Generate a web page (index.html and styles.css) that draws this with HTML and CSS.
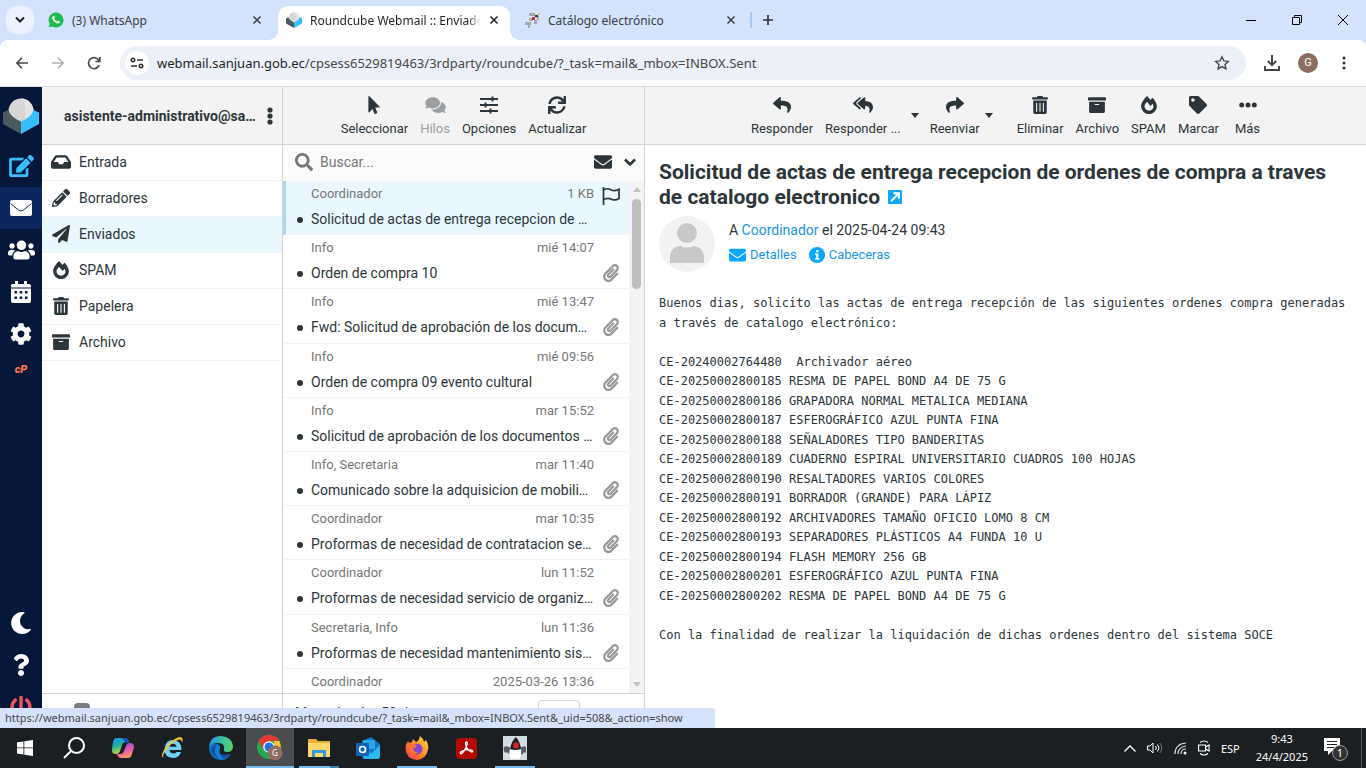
FILE: index.html
```html
<!DOCTYPE html>
<html lang="es">
<head>
<meta charset="utf-8">
<title>Roundcube Webmail :: Enviados</title>
<link rel="stylesheet" href="styles.css">
</head>
<body>
<svg class="sprite" aria-hidden="true">
  <symbol id="i-close" viewBox="0 0 10 10"><path d="M1.500 1.500l7 7M8.500 1.500l-7 7" fill="none" stroke="currentColor" stroke-width="1.500"/></symbol>
  <symbol id="i-cube" viewBox="0 0 36 36"><circle cx="18" cy="13" r="12.500" fill="#d6d6d6"/><path d="M18 .5a12.500 12.500 0 0 1 0 25 12.500 12.500 0 0 0 4-12 14 14 0 0 0-4-13z" fill="#e4e4e4"/><path d="M0 14.500l5.500-2.500q1.500 7 12.500 11.500V36L0 26z" fill="#4b5a61"/><path d="M36 14.500L30.500 12q-1.500 7-12.500 11.500V36l18-10z" fill="#37beff"/></symbol>
  <symbol id="i-envelope" viewBox="0 0 512 512"><path d="M502.300 190.800c3.900-3.100 9.700-.2 9.700 4.700V400c0 26.500-21.500 48-48 48H48c-26.500 0-48-21.500-48-48V195.600c0-5 5.700-7.800 9.700-4.700 22.400 17.400 52.100 39.500 154.100 113.600 21.100 15.400 56.700 47.800 92.200 47.600 35.700.3 72-32.800 92.300-47.600 102-74.100 131.600-96.300 154-113.700zM256 320c23.200.4 56.600-29.200 73.400-41.400 132.700-96.300 142.800-104.700 173.400-128.700 5.800-4.500 9.200-11.500 9.200-18.900v-19c0-26.500-21.500-48-48-48H48c-26.500 0-48 21.500-48 48v19c0 7.400 3.400 14.300 9.200 18.900 30.600 23.900 40.700 32.400 173.400 128.700 16.800 12.200 50.200 41.800 73.400 41.400z"/></symbol>
  <symbol id="i-mail" viewBox="0 0 22 16"><rect width="22" height="16" rx="2"/><path d="M.5 3.500l8 6.500q2.500 2 5 0l8-6.500" fill="none" stroke="#0c2660" stroke-width="1"/></symbol>
  <symbol id="i-edit" viewBox="0 0 576 512"><path d="M402.600 83.200l90.200 90.200c3.800 3.800 3.800 10 0 13.800L274.400 405.600l-92.800 10.300c-12.400 1.400-22.900-9.100-21.500-21.500l10.300-92.800L388.800 83.200c3.800-3.800 10-3.800 13.800 0zm162-22.900l-48.800-48.800c-15.200-15.200-39.900-15.200-55.200 0l-35.400 35.400c-3.800 3.800-3.800 10 0 13.800l90.200 90.200c3.800 3.800 10 3.800 13.800 0l35.400-35.400c15.200-15.300 15.200-40 0-55.200zM384 346.200V448H64V128h229.800c3.200 0 6.200-1.300 8.500-3.500l40-40c7.600-7.600 2.200-20.500-8.500-20.500H48C21.500 64 0 85.500 0 112v352c0 26.500 21.500 48 48 48h352c26.500 0 48-21.500 48-48V306.200c0-10.700-12.900-16-20.500-8.500l-40 40c-2.200 2.300-3.500 5.300-3.500 8.500z"/></symbol>
  <symbol id="i-users" viewBox="0 0 640 512"><path d="M96 224c35.300 0 64-28.700 64-64s-28.700-64-64-64-64 28.700-64 64 28.700 64 64 64zm448 0c35.300 0 64-28.700 64-64s-28.700-64-64-64-64 28.700-64 64 28.700 64 64 64zm32 32h-64c-17.600 0-33.500 7.100-45.100 18.600 40.300 22.100 68.900 62 75.100 109.400h66c17.700 0 32-14.300 32-32v-32c0-35.300-28.700-64-64-64zm-256 0c61.900 0 112-50.100 112-112S381.900 32 320 32 208 82.100 208 144s50.100 112 112 112zm76.800 32h-8.300c-20.800 10-43.900 16-68.500 16s-47.600-6-68.500-16h-8.300C179.600 288 128 339.600 128 403.200V432c0 26.500 21.500 48 48 48h288c26.500 0 48-21.500 48-48v-28.800c0-63.600-51.600-115.200-115.200-115.200zm-223.700-13.400C161.500 263.100 145.600 256 128 256H64c-35.300 0-64 28.700-64 64v32c0 17.700 14.300 32 32 32h65.900c6.300-47.400 34.900-87.300 75.200-109.400z"/></symbol>
  <symbol id="i-calendar" viewBox="0 0 20 22"><path fill-rule="evenodd" d="M2 3h2V0h3v3h6V0h3v3h2q2 0 2 2v1.500H0V5q0-2 2-2zM0 7.500h20V20q0 2-2 2H2q-2 0-2-2zM3.500 10v2.500H6V10zM8.700 10v2.500h2.500V10zM14 10v2.500h2.500V10zM3.500 15.500V18H6v-2.500zM8.700 15.500V18h2.500v-2.500zM14 15.500V18h2.500v-2.500z"/></symbol>
  <symbol id="i-cog" viewBox="0 0 512 512"><path d="M487.400 315.700l-42.600-24.600c4.300-23.200 4.300-47 0-70.200l42.600-24.600c4.900-2.800 7.100-8.600 5.500-14-11.100-35.600-30-67.800-54.700-94.600-3.800-4.100-10-5.100-14.800-2.300L380.800 110c-17.900-15.400-38.500-27.300-60.800-35.100V25.800c0-5.600-3.900-10.500-9.400-11.700-36.700-8.200-74.300-7.800-109.200 0-5.500 1.200-9.400 6.100-9.400 11.700V75c-22.200 7.900-42.800 19.800-60.800 35.100L88.700 85.500c-4.900-2.800-11-1.900-14.800 2.300-24.700 26.700-43.600 58.900-54.700 94.600-1.700 5.400.6 11.200 5.500 14L67.300 221c-4.300 23.200-4.300 47 0 70.200l-42.600 24.600c-4.900 2.800-7.100 8.600-5.500 14 11.100 35.600 30 67.800 54.700 94.600 3.800 4.100 10 5.100 14.800 2.300l42.600-24.600c17.900 15.400 38.500 27.300 60.800 35.100v49.200c0 5.600 3.900 10.500 9.400 11.700 36.700 8.200 74.300 7.800 109.200 0 5.500-1.200 9.400-6.100 9.400-11.700v-49.200c22.200-7.900 42.800-19.800 60.800-35.100l42.600 24.600c4.900 2.800 11 1.900 14.800-2.300 24.700-26.700 43.600-58.900 54.700-94.600 1.500-5.500-.7-11.300-5.600-14.100zM256 336c-44.100 0-80-35.900-80-80s35.900-80 80-80 80 35.900 80 80-35.900 80-80 80z"/></symbol>
  <symbol id="i-moon" viewBox="0 0 512 512"><path d="M283.200 512c79 0 151.100-35.900 198.900-94.800 7.100-8.700-.6-21.400-11.600-19.300-124.200 23.600-238.300-71.600-238.300-197 0-72.200 38.700-138.600 101.500-174.400 9.700-5.500 7.300-20.200-3.700-22.200A258.200 258.200 0 0 0 283.200 0c-141.300 0-256 114.500-256 256 0 141.300 114.500 256 256 256z"/></symbol>
  <symbol id="i-question" viewBox="0 0 384 512"><path d="M202 0C122.200 0 70.500 32.700 29.900 91c-7.400 10.600-5.100 25.100 5.200 32.900l43.100 32.700c10.400 7.900 25.200 6 33.300-4.100 25-31.400 43.600-49.500 82.700-49.500 30.800 0 68.800 19.800 68.800 49.600 0 22.600-18.600 34.200-49 51.200-35.400 19.900-82.300 44.600-82.300 106.400V320c0 13.300 10.700 24 24 24h72.500c13.300 0 24-10.700 24-24v-5.800c0-42.900 125.300-44.600 125.300-160.600C377.500 66.300 286.900 0 202 0zM192 373.500c-38.200 0-69.300 31-69.300 69.200S153.800 512 192 512s69.300-31.100 69.300-69.300-31.100-69.200-69.300-69.200z"/></symbol>
  <symbol id="i-power" viewBox="0 0 512 512"><path d="M400 54.100c63 45 104 118.600 104 201.900 0 136.800-110.800 247.700-247.500 248C120 504.300 8.200 393 8 256.400 7.900 173.100 48.900 99.300 111.800 54.200c11.700-8.300 28-4.800 35 7.700L162.600 90c5.900 10.500 3.100 23.800-6.600 31-41.500 30.800-68 79.600-68 134.900-.1 92.300 74.500 168.100 168 168.100 91.600 0 168.600-74.200 168-169.100-.3-51.800-24.700-101.800-68.100-134-9.700-7.200-12.400-20.500-6.500-30.900l15.800-28.100c7-12.400 23.200-16.100 34.800-7.800zM296 264V24c0-13.300-10.700-24-24-24h-32c-13.300 0-24 10.700-24 24v240c0 13.300 10.700 24 24 24h32c13.300 0 24-10.700 24-24z"/></symbol>
  <symbol id="i-inbox" viewBox="0 0 576 512"><path d="M567.900 243.900L462.300 85.400A48 48 0 0 0 422.300 64H153.700a48 48 0 0 0-39.900 21.400L8.100 243.900A48 48 0 0 0 0 270.500V400c0 26.500 21.500 48 48 48h480c26.500 0 48-21.500 48-48V270.500a48 48 0 0 0-8.100-26.600zM162.300 128h251.400l85.400 128H376l-32 64H232l-32-64H76.900z"/></symbol>
  <symbol id="i-pencil" viewBox="0 0 512 512"><path d="M497.900 142.100l-46.100 46.100c-4.700 4.700-12.300 4.700-17 0l-111-111c-4.700-4.700-4.700-12.300 0-17l46.100-46.100c18.700-18.700 49.100-18.700 67.900 0l60.100 60.100c18.800 18.700 18.800 49.100 0 67.900zM284.200 99.800L21.600 362.400.4 483.900c-2.900 16.400 11.400 30.600 27.800 27.800l121.500-21.300 262.600-262.600c4.700-4.700 4.700-12.300 0-17l-111-111c-4.800-4.700-12.400-4.700-17.100 0zM124.100 339.900c-5.500-5.500-5.500-14.300 0-19.800l154-154c5.500-5.500 14.300-5.500 19.800 0s5.500 14.300 0 19.800l-154 154c-5.500 5.500-14.300 5.500-19.800 0zM88 424h48v36.300l-64.500 11.300-31.100-31.100L51.700 376H88v48z"/></symbol>
  <symbol id="i-plane" viewBox="0 0 512 512"><path d="M476 3.200L12.500 270.600c-18.100 10.400-15.800 35.600 2.200 43.200L121 358.400l287.300-253.200c5.500-4.900 13.300 2.600 8.600 8.300L176 407v80.500c0 23.600 28.500 32.900 42.500 15.800L282 426l124.600 52.200c14.200 6 30.400-2.900 33-18.200l72-432C515 7.800 493.300-6.800 476 3.200z"/></symbol>
  <symbol id="i-fire" viewBox="0 0 448 512"><path d="M323.600 51.200c-20.800 19.300-39.600 39.600-56.300 60C240.100 73.600 206.300 35.500 168 0 69.700 91.200 0 210 0 281.600 0 408.900 100.300 512 224 512s224-103.100 224-230.400c0-53.300-52-163.100-124.400-230.400zm-19.500 340.700C282.400 407 255.700 416 226.900 416 154.700 416 96 368.300 96 290.800c0-38.700 24.300-72.700 72.800-130.800 6.900 8 98.800 125.300 98.800 125.300l58.700-66.800c4.100 6.800 7.900 13.500 11.200 19.900 27.400 52.200 15.800 119-33.400 153.500z"/></symbol>
  <symbol id="i-trash" viewBox="0 0 448 512"><path d="M32 464a48 48 0 0 0 48 48h288a48 48 0 0 0 48-48V128H32zm272-256a16 16 0 0 1 32 0v224a16 16 0 0 1-32 0zm-96 0a16 16 0 0 1 32 0v224a16 16 0 0 1-32 0zm-96 0a16 16 0 0 1 32 0v224a16 16 0 0 1-32 0zM432 32H312l-9.400-18.700A24 24 0 0 0 281.100 0H166.800a23.700 23.700 0 0 0-21.400 13.300L136 32H16A16 16 0 0 0 0 48v32a16 16 0 0 0 16 16h416a16 16 0 0 0 16-16V48a16 16 0 0 0-16-16z"/></symbol>
  <symbol id="i-archive" viewBox="0 0 512 512"><path d="M32 448c0 17.700 14.300 32 32 32h384c17.700 0 32-14.300 32-32V160H32v288zm160-212c0-6.600 5.400-12 12-12h104c6.600 0 12 5.400 12 12v8c0 6.600-5.400 12-12 12H204c-6.600 0-12-5.400-12-12v-8zM480 32H32C14.300 32 0 46.300 0 64v48c0 8.800 7.200 16 16 16h480c8.800 0 16-7.200 16-16V64c0-17.700-14.300-32-32-32z"/></symbol>
  <symbol id="i-pointer" viewBox="0 0 320 512"><path d="M302.200 329.100H196.100l55.800 136c3.900 9.400-.5 20-9.400 24l-49.200 21.400c-9.200 4-19.400-.5-23.300-9.700l-53.100-129.100-86.600 89.100C18.700 472.700 0 463.600 0 448V18.300C0 1.900 19.900-6.100 30.300 5.400L314.700 298c11.500 11.200 3 31.100-12.500 31.100z"/></symbol>
  <symbol id="i-comments" viewBox="0 0 576 512"><path d="M416 192c0-88.400-93.100-160-208-160S0 103.600 0 192c0 34.300 14.100 65.900 38 92-13.400 30.200-35.500 54.200-35.800 54.500-2.200 2.300-2.800 5.700-1.500 8.700S4.800 352 8 352c36.600 0 66.900-12.300 88.700-25 32.200 15.700 70.300 25 111.300 25 114.900 0 208-71.600 208-160zm122 220c23.900-26 38-57.700 38-92 0-66.900-53.500-124.200-129.300-148.100.9 6.600 1.300 13.300 1.300 20.100 0 105.900-107.700 192-240 192-10.800 0-21.300-.8-31.700-1.900C207.800 439.600 281.800 480 368 480c41 0 79.100-9.200 111.300-25 21.800 12.700 52.100 25 88.700 25 3.200 0 6.100-1.900 7.300-4.800 1.300-2.900.7-6.300-1.500-8.700-.3-.3-22.400-24.200-35.800-54.500z"/></symbol>
  <symbol id="i-sliders" viewBox="0 0 18 18"><path d="M0 3h18M0 9h18M0 15h18" stroke="currentColor" stroke-width="2" fill="none"/><path d="M12.500 .5v5M5.500 6.500v5M10.500 12.500v5" stroke="currentColor" stroke-width="2" fill="none"/></symbol>
  <symbol id="i-sync" viewBox="0 0 512 512"><path d="M440.700 12.600l4 82.800A247.200 247.200 0 0 0 255.800 8C134.700 8 33.900 94.900 12.300 209.800A12 12 0 0 0 24.100 224h49a12 12 0 0 0 11.700-9.300 175.900 175.900 0 0 1 317-56.900l-101.500-4.900a12 12 0 0 0-12.500 12v47.400a12 12 0 0 0 12 12H500a12 12 0 0 0 12-12V12a12 12 0 0 0-12-12h-47.400a12 12 0 0 0-11.900 12.600zM255.800 432a175.600 175.600 0 0 1-146-77.800l101.800 4.900a12 12 0 0 0 12.600-12v-47.400a12 12 0 0 0-12-12H12a12 12 0 0 0-12 12V500a12 12 0 0 0 12 12h47.400a12 12 0 0 0 12-12.600l-4.200-82.600A247.200 247.200 0 0 0 255.800 504c121.100 0 222-86.900 243.600-201.800a12 12 0 0 0-11.800-14.200h-49.100a12 12 0 0 0-11.600 9.300A175.900 175.900 0 0 1 255.800 432z"/></symbol>
  <symbol id="i-search" viewBox="0 0 512 512"><path d="M505 442.700L405.300 343c-4.500-4.500-10.600-7-17-7H372c27.600-35.300 44-79.700 44-128C416 93.100 322.900 0 208 0S0 93.100 0 208s93.100 208 208 208c48.300 0 92.700-16.400 128-44v16.300c0 6.400 2.500 12.500 7 17l99.700 99.700c9.400 9.400 24.600 9.400 33.900 0l28.300-28.300c9.400-9.400 9.400-24.600.1-34zM208 336c-70.700 0-128-57.200-128-128 0-70.700 57.200-128 128-128 70.700 0 128 57.200 128 128 0 70.700-57.200 128-128 128z"/></symbol>
  <symbol id="i-chevron" viewBox="0 0 12 8"><path d="M1 1.500l5 5 5-5" fill="none" stroke="currentColor" stroke-width="2.500"/></symbol>
  <symbol id="i-flag" viewBox="0 0 18 18"><path d="M1.500 0v18M1.500 3q4-2.500 8 0 3.500 1.500 7.500-.8v9.300q-4 2.500-7.500.7-4-2-8 .5" fill="none" stroke="currentColor" stroke-width="1.700"/></symbol>
  <symbol id="i-clip" viewBox="0 0 448 512"><path d="M43.200 466.100c-58.400-60.200-57.300-157.500 1.400-217.500L254.400 34c44.300-45.300 116.400-45.300 160.700 0 43.900 44.900 43.900 117.300 0 162.300L232.200 383.100c-29.900 30.600-78.600 30.100-108-1-28.200-29.900-27.300-77.400 1.500-106.900l143.700-146.900c6.200-6.300 16.300-6.400 22.700-.2l22.800 22.400c6.300 6.100 6.400 16.300.3 22.600L171.400 319.900c-4.900 5.100-5.200 13.400-.6 18.300 4.300 4.600 11.200 4.700 15.700.2l182.800-186.900c19.600-20.100 19.600-52.700 0-72.800-19.200-19.600-50-19.600-69.200 0L90.400 293.300c-34.800 35.600-35.300 93.100-1.200 128.300 34 35.100 89 35.100 123.100.3l172-176c6.200-6.300 16.300-6.400 22.600-.3l22.900 22.400c6.300 6.200 6.400 16.300.3 22.600L258 466.600c-59.600 61-155.900 60.200-214.800-.5z"/></symbol>
  <symbol id="i-reply" viewBox="0 0 512 512"><path d="M8.300 189.800l176-151.900C199.700 24.500 224 35.300 224 56v80.100c160.600 1.800 288 34 288 186.200 0 61.500-39.600 122.400-83.300 154.200-13.700 9.900-33.100-2.600-28.100-18.700 45.300-145-21.500-183.500-176.600-185.700V360c0 20.700-24.300 31.500-39.700 18.200l-176-152c-11.100-9.600-11.100-26.800 0-36.400z"/></symbol>
  <symbol id="i-forward" viewBox="0 0 512 512"><use href="#i-reply" transform="translate(512 0) scale(-1 1)" width="512" height="512"/></symbol>
  <symbol id="i-replyall" viewBox="0 0 576 512"><path d="M136.300 189.800l176-151.900C327.700 24.500 352 35.300 352 56v82.800c129.200 10.200 224 52.200 224 183.500 0 61.500-39.600 122.400-83.300 154.200-13.700 9.900-33.100-2.600-28.100-18.700 38.500-123.100-3.900-169.400-112.600-182V360c0 20.700-24.300 31.500-39.700 18.200l-176-152c-11.100-9.600-11.100-26.800 0-36.400zm-128 36.400l176 152C199.700 391.400 224 380.700 224 360v-15.800l-108.600-93.800A56 56 0 0 1 96 208a56 56 0 0 1 19.400-42.400L224 71.800V56c0-20.700-24.300-31.500-39.700-18.100l-176 151.900c-11.100 9.600-11.100 26.800 0 36.400z"/></symbol>
  <symbol id="i-tag" viewBox="0 0 512 512"><path d="M0 252.100V48C0 21.500 21.500 0 48 0h204.100a48 48 0 0 1 34 14.100l211.800 211.800c18.800 18.800 18.800 49.200 0 67.900L293.800 497.900c-18.700 18.800-49.100 18.800-67.900 0L14.100 286.100a48 48 0 0 1-14.100-34zM112 64c-26.500 0-48 21.500-48 48s21.500 48 48 48 48-21.500 48-48-21.500-48-48-48z"/></symbol>
  <symbol id="i-dots" viewBox="0 0 18 18"><circle cx="2.700" cy="9" r="2.500"/><circle cx="9" cy="9" r="2.500"/><circle cx="15.300" cy="9" r="2.500"/></symbol>
  <symbol id="i-caret" viewBox="0 0 8 5"><path d="M0 0h8L4 5z"/></symbol>
</svg>

<div class="screen">
  <header class="tabstrip">
    <button class="tab-search" aria-label="Buscar pestañas"><svg width="10" height="8" viewBox="0 0 10 8"><path d="M1 1.500l4 4 4-4" fill="none" stroke="#1f1f1f" stroke-width="2"/></svg></button>
    <div class="tab">
      <svg width="16" height="16" viewBox="0 0 16 16"><circle cx="8" cy="8" r="7.500" fill="#1dbb4b"/><path d="M.8 15.300l1-4 3 3z" fill="#1dbb4b"/><path d="M4.600 4.500q1-1.300 1.700-.3l.7 1.500-.8 1.100q1 2 2.800 2.700l1-1 1.900.9q.5.900-.8 1.900-1.500.8-4.200-1-2.500-2-2.800-4-.1-1 .5-1.800z" fill="#fff"/></svg>
      <span class="tab-title">(3) WhatsApp</span>
      <button class="tab-close" aria-label="Cerrar"><svg width="10" height="10"><use href="#i-close"/></svg></button>
    </div>
    <div class="tab active">
      <svg width="16" height="16"><use href="#i-cube"/></svg>
      <span class="tab-title fade">Roundcube Webmail :: Enviados</span>
      <button class="tab-close" aria-label="Cerrar"><svg width="10" height="10"><use href="#i-close"/></svg></button>
    </div>
    <div class="tab">
      <svg width="16" height="16" viewBox="0 0 16 16"><path d="M5 1h6v3H5zM5 6h4v3H5zM1 10h6v3H1zM4 13h2v3H4zM12 4h3v4h-2zM10 8h3v4h-3z" fill="#aaa"/><path d="M8 5h3v3H8z" fill="#d32b2b"/><path d="M11 3h3v2h-3z" fill="#334"/><path d="M14 1h2v2h-2z" fill="#eac04b"/></svg>
      <span class="tab-title">Catálogo electrónico</span>
      <button class="tab-close" aria-label="Cerrar"><svg width="10" height="10"><use href="#i-close"/></svg></button>
    </div>
    <span class="tab-sep"></span>
    <button class="tab-new" aria-label="Nueva pestaña"><svg width="12" height="12" viewBox="0 0 12 12"><path d="M6 1v10M1 6h10" stroke="#333" stroke-width="1.700"/></svg></button>
    <div class="window-buttons">
      <button aria-label="Minimizar"><svg width="10" height="10" viewBox="0 0 10 10"><path d="M0 5.500h10" stroke="#000"/></svg></button>
      <button aria-label="Restaurar"><svg width="10" height="10" viewBox="0 0 10 10"><path d="M.5 2.500h7v7h-7zM2.500 2.500v-2h7v7h-2" fill="none" stroke="#000"/></svg></button>
      <button aria-label="Cerrar ventana"><svg width="10" height="10" viewBox="0 0 10 10"><path d="M0 0l10 10M10 0L0 10" stroke="#000"/></svg></button>
    </div>
  </header>

  <div class="navbar-wrap">
    <nav class="navbar">
      <div class="nav-group">
        <button aria-label="Atrás"><svg width="12" height="12" viewBox="0 0 12 12"><path d="M12 6H1M6 .8L.9 6 6 11.200" fill="none" stroke="#474747" stroke-width="1.600"/></svg></button>
        <button aria-label="Adelante"><svg width="12" height="12" viewBox="0 0 12 12"><path d="M0 6h11M6 .8L11.100 6 6 11.200" fill="none" stroke="#b0b0b0" stroke-width="1.600"/></svg></button>
        <button aria-label="Recargar"><svg width="14" height="14" viewBox="0 0 14 14"><path d="M12.200 9A5.500 5.500 0 1 1 12 4.800M12.800 1v4.500H8.300" fill="none" stroke="#474747" stroke-width="1.700"/></svg></button>
      </div>
      <div class="omnibox">
        <button class="site-info" aria-label="Información del sitio"><svg width="14" height="12" viewBox="0 0 14 12"><g fill="none" stroke="#333" stroke-width="1.600"><circle cx="3" cy="3" r="1.700"/><path d="M7 3h6M1 9h6"/><circle cx="11" cy="9" r="1.700"/></g></svg></button>
        <span class="url"><b>webmail.sanjuan.gob.ec</b>/cpsess6529819463/3rdparty/roundcube/?_task=mail&amp;_mbox=INBOX.Sent</span>
        <button class="star" aria-label="Añadir a marcadores"><svg width="16" height="16" viewBox="0 0 16 16"><path d="M8 1.800l1.900 4.100 4.400.5-3.300 3 .9 4.400L8 11.600l-3.900 2.200.9-4.400-3.300-3 4.400-.5z" fill="none" stroke="#474747" stroke-width="1.400"/></svg></button>
      </div>
      <div class="nav-group">
        <button aria-label="Descargas"><svg width="16" height="16" viewBox="0 0 16 16"><path d="M8 0v10M3.800 6L8 10.200 12.200 6M1 11v4h14v-4" fill="none" stroke="#474747" stroke-width="2"/></svg></button>
        <button aria-label="Perfil"><span class="profile">G</span></button>
        <button aria-label="Menú"><svg width="4" height="14" viewBox="0 0 4 14"><circle cx="2" cy="2" r="1.500"/><circle cx="2" cy="7" r="1.500"/><circle cx="2" cy="12" r="1.500"/></svg></button>
      </div>
    </nav>
  </div>

  <div class="mail">
    <nav class="rail">
      <a class="logo" href="#" aria-label="Roundcube"><svg width="36" height="36"><use href="#i-cube"/></svg></a>
      <a class="compose" href="#" aria-label="Redactar"><svg width="25" height="22"><use href="#i-edit"/></svg></a>
      <a class="current" href="#" aria-label="Correo"><svg width="22" height="16"><use href="#i-mail"/></svg></a>
      <a href="#" aria-label="Contactos"><svg width="27" height="22"><use href="#i-users"/></svg></a>
      <a href="#" aria-label="Calendario"><svg width="20" height="22"><use href="#i-calendar"/></svg></a>
      <a href="#" aria-label="Configuración"><svg width="22" height="22"><use href="#i-cog"/></svg></a>
      <a class="cpanel" href="#">cP</a>
      <span class="spacer"></span>
      <a href="#" aria-label="Modo oscuro"><svg width="22" height="22"><use href="#i-moon"/></svg></a>
      <a href="#" aria-label="Acerca de"><svg width="18" height="22"><use href="#i-question"/></svg></a>
      <a class="logout" href="#" aria-label="Salir"><svg width="22" height="22"><use href="#i-power"/></svg></a>
    </nav>

    <section class="folders">
      <header class="bar account"><strong>asistente-administrativo@sa…</strong>
        <button aria-label="Opciones de carpeta"><svg width="6" height="18" viewBox="0 0 6 18"><circle cx="3" cy="3" r="2.600"/><circle cx="3" cy="9" r="2.600"/><circle cx="3" cy="15" r="2.600"/></svg></button></header>
      <ul>
        <li><a href="#"><svg width="20" height="18"><use href="#i-inbox"/></svg>Entrada</a></li>
        <li><a href="#"><svg width="20" height="18"><use href="#i-pencil"/></svg>Borradores</a></li>
        <li class="selected"><a href="#"><svg width="20" height="18"><use href="#i-plane"/></svg>Enviados</a></li>
        <li><a href="#"><svg width="20" height="18"><use href="#i-fire"/></svg>SPAM</a></li>
        <li><a href="#"><svg width="20" height="18"><use href="#i-trash"/></svg>Papelera</a></li>
        <li><a href="#"><svg width="20" height="18"><use href="#i-archive"/></svg>Archivo</a></li>
      </ul>
      <footer class="foot"><span class="quota"></span></footer>
    </section>

    <section class="list">
      <header class="bar tools">
        <button><svg width="18" height="18"><use href="#i-pointer"/></svg>Seleccionar</button>
        <button disabled><svg width="21" height="18"><use href="#i-comments"/></svg>Hilos</button>
        <button><svg width="18" height="18"><use href="#i-sliders"/></svg>Opciones</button>
        <button><svg width="18" height="18"><use href="#i-sync"/></svg>Actualizar</button>
      </header>
      <form class="search">
        <svg width="18" height="18"><use href="#i-search"/></svg>
        <input type="text" placeholder="Buscar..." aria-label="Buscar">
        <button type="button" aria-label="No leídos"><svg width="18" height="18"><use href="#i-envelope"/></svg></button>
        <button type="button" aria-label="Opciones de búsqueda"><svg width="12" height="8"><use href="#i-chevron"/></svg></button>
      </form>
      <div class="scroller">
        <ul class="messages">
          <li class="selected"><span class="from">Coordinador</span><span class="date">1 KB</span><svg class="flag" width="18" height="18"><use href="#i-flag"/></svg><a class="subject" href="#">Solicitud de actas de entrega recepcion de …</a></li>
          <li><span class="from">Info</span><span class="date">mié 14:07</span><a class="subject" href="#">Orden de compra 10</a><svg class="clip" width="18" height="18"><use href="#i-clip"/></svg></li>
          <li><span class="from">Info</span><span class="date">mié 13:47</span><a class="subject" href="#">Fwd: Solicitud de aprobación de los docum…</a><svg class="clip" width="18" height="18"><use href="#i-clip"/></svg></li>
          <li><span class="from">Info</span><span class="date">mié 09:56</span><a class="subject" href="#">Orden de compra 09 evento cultural</a><svg class="clip" width="18" height="18"><use href="#i-clip"/></svg></li>
          <li><span class="from">Info</span><span class="date">mar 15:52</span><a class="subject" href="#">Solicitud de aprobación de los documentos …</a><svg class="clip" width="18" height="18"><use href="#i-clip"/></svg></li>
          <li><span class="from">Info, Secretaria</span><span class="date">mar 11:40</span><a class="subject" href="#">Comunicado sobre la adquisicion de mobili…</a><svg class="clip" width="18" height="18"><use href="#i-clip"/></svg></li>
          <li><span class="from">Coordinador</span><span class="date">mar 10:35</span><a class="subject" href="#">Proformas de necesidad de contratacion se…</a><svg class="clip" width="18" height="18"><use href="#i-clip"/></svg></li>
          <li><span class="from">Coordinador</span><span class="date">lun 11:52</span><a class="subject" href="#">Proformas de necesidad servicio de organiz…</a><svg class="clip" width="18" height="18"><use href="#i-clip"/></svg></li>
          <li><span class="from">Secretaria, Info</span><span class="date">lun 11:36</span><a class="subject" href="#">Proformas de necesidad mantenimiento sis…</a><svg class="clip" width="18" height="18"><use href="#i-clip"/></svg></li>
          <li><span class="from">Coordinador</span><span class="date">2025-03-26 13:36</span></li>
        </ul>
        <div class="scrollbar"><svg width="8" height="5" viewBox="0 0 8 5"><path d="M0 5h8L4 0z"/></svg><span class="thumb"></span><svg width="8" height="5"><use href="#i-caret"/></svg></div>
      </div>
      <footer class="foot pager"><span>Mensajes 1 a 50 de</span><input type="text" aria-label="Página"><b>›</b><b>»</b></footer>
    </section>

    <main class="reader">
      <header class="bar tools">
        <button><svg width="18" height="18"><use href="#i-reply"/></svg>Responder</button>
        <button><svg width="20" height="18"><use href="#i-replyall"/></svg>Responder ...</button>
        <button class="drop" aria-label="Opciones de respuesta"><svg width="8" height="5"><use href="#i-caret"/></svg></button>
        <button><svg width="18" height="18"><use href="#i-forward"/></svg>Reenviar</button>
        <button class="drop wide" aria-label="Opciones de reenvío"><svg width="8" height="5"><use href="#i-caret"/></svg></button>
        <button><svg width="18" height="18"><use href="#i-trash"/></svg>Eliminar</button>
        <button><svg width="18" height="18"><use href="#i-archive"/></svg>Archivo</button>
        <button><svg width="18" height="18"><use href="#i-fire"/></svg>SPAM</button>
        <button><svg width="18" height="18"><use href="#i-tag"/></svg>Marcar</button>
        <button class="more"><svg width="18" height="18"><use href="#i-dots"/></svg>Más</button>
      </header>
      <article>
        <h2>Solicitud de actas de entrega recepcion de ordenes de compra a traves de catalogo electronico <a href="#" aria-label="Abrir en ventana nueva"><svg width="14" height="14" viewBox="0 0 14 14"><rect width="14" height="14" rx="1" fill="#0ba7ff"/><path d="M3 11.200l7-7M5.500 3.200h5.500v5.500" fill="none" stroke="#fff" stroke-width="2"/></svg></a></h2>
        <div class="summary">
          <svg class="photo" width="56" height="56" viewBox="0 0 56 56"><circle cx="28" cy="28" r="28" fill="#f2f2f2"/><circle cx="28" cy="17" r="10" fill="#c8c8c8"/><path d="M11 47V40q1-9 10-10 7 3 14 0 9 1 10 10v7z" fill="#c8c8c8"/></svg>
          <div>
            <p class="to">A <a href="#">Coordinador</a> el 2025-04-24 09:43</p>
            <p class="links"><a href="#"><svg width="17" height="18"><use href="#i-envelope"/></svg>Detalles</a><a href="#"><svg width="16" height="16" viewBox="0 0 16 16"><circle cx="8" cy="8" r="8"/><path d="M7 3h2.500v2.200H7zM6 6.500h3.300v4.700H10.500v1.500H6v-1.500h1.200V8H6z" fill="#fff"/></svg>Cabeceras</a></p>
          </div>
        </div>
        <pre>Buenos dias, solicito las actas de entrega recepción de las siguientes ordenes compra generadas
a través de catalogo electrónico:

CE-20240002764480  Archivador aéreo
CE-20250002800185 RESMA DE PAPEL BOND A4 DE 75 G
CE-20250002800186 GRAPADORA NORMAL METALICA MEDIANA
CE-20250002800187 ESFEROGRÁFICO AZUL PUNTA FINA
CE-20250002800188 SEÑALADORES TIPO BANDERITAS
CE-20250002800189 CUADERNO ESPIRAL UNIVERSITARIO CUADROS 100 HOJAS
CE-20250002800190 RESALTADORES VARIOS COLORES
CE-20250002800191 BORRADOR (GRANDE) PARA LÁPIZ
CE-20250002800192 ARCHIVADORES TAMAÑO OFICIO LOMO 8 CM
CE-20250002800193 SEPARADORES PLÁSTICOS A4 FUNDA 10 U
CE-20250002800194 FLASH MEMORY 256 GB
CE-20250002800201 ESFEROGRÁFICO AZUL PUNTA FINA
CE-20250002800202 RESMA DE PAPEL BOND A4 DE 75 G

Con la finalidad de realizar la liquidación de dichas ordenes dentro del sistema SOCE</pre>
      </article>
    </main>
    <div class="status">https://webmail.sanjuan.gob.ec/cpsess6529819463/3rdparty/roundcube/?_task=mail&amp;_mbox=INBOX.Sent&amp;_uid=508&amp;_action=show</div>
  </div>

  <footer class="taskbar">
    <button aria-label="Inicio"><svg width="16" height="16" viewBox="0 0 16 16"><path d="M0 2.300l6.500-.9v6.100H0zM7.300 1.300L16 0v7.500H7.300zM0 8.300h6.500v6.200L0 13.600zM7.300 8.300H16V16l-8.700-1.300z" fill="#fff"/></svg></button>
    <button aria-label="Buscar"><svg width="22" height="22" viewBox="0 0 22 22"><circle cx="13.500" cy="8.500" r="7.500" fill="none" stroke="#fff" stroke-width="2"/><path d="M8 14l-7 7" stroke="#fff" stroke-width="2"/></svg></button>
    <button aria-label="Copilot"><svg width="24" height="22" viewBox="0 0 24 22"><defs><linearGradient id="ca" x2=".4" y2="1"><stop stop-color="#1795f5"/><stop offset=".5" stop-color="#19b3a0"/><stop offset="1" stop-color="#d9d436"/></linearGradient><linearGradient id="cb" x1=".3" x2=".6" y2="1"><stop stop-color="#8b55ef"/><stop offset=".5" stop-color="#e85aa8"/><stop offset="1" stop-color="#fb9a5c"/></linearGradient></defs><path d="M5 1h9q3 0 4 4h-4q-2 0-3 3l-2 6q-1 3-4 3-5 0-4-5l1-7q1-4 3-4z" fill="url(#ca)"/><path d="M19 6q4 0 4 4l-2 7q-1 4-4 4H10q-3 0-4-4h4q2 0 3-3l2-5q1-3 4-3z" fill="url(#cb)"/><path d="M10 1h4q3 0 4 5h-3q-2-4-5-5z" fill="#1745c8"/></svg></button>
    <button aria-label="Internet Explorer"><svg width="24" height="24" viewBox="0 0 24 24"><path fill-rule="evenodd" d="M21.500 14H9.500q.5 3.500 4 3.500 2 0 3-1.500h4.500q-2 6-8 6-8.500-.5-8.500-9Q5.500 4 13 4q8.500.5 8.500 10zM9.500 10.800h7q-.5-3-3.500-3t-3.500 3z" fill="#6fd3f8"/><path d="M3.500 22q-4-2 2.500-11Q13 2.500 19.500 1q4.500 0 2.500 6 0-3.500-3-3.500Q12 5.500 6 14q-4 6-2.500 8z" fill="#f5c33b"/></svg></button>
    <button aria-label="Edge"><svg width="24" height="24" viewBox="0 0 24 24"><defs><linearGradient id="eg"><stop stop-color="#1c9be6"/><stop offset="1" stop-color="#55d66b"/></linearGradient></defs><path d="M0 11Q1 0 12 0q11 1 12 10 0 6-6 6-4 0-3-3 1-6-6-6-6 0-9 4z" fill="url(#eg)"/><path d="M0 12q2-5 8-4 4 1 3 4-2 8 5 9 4 0 6-3-4 6-10 6Q1 23 0 12z" fill="#1180d8"/><path d="M8 8q-5 8 2 15-9-3-8-11 2-4 6-4zM11 13q-3 8 11 5-4 6-8 4-4-3-3-9z" fill="#14529e"/></svg></button>
    <button class="on focus" aria-label="Chrome"><svg width="26" height="26" viewBox="0 0 26 26"><circle cx="12" cy="12" r="12" fill="#26a552"/><path d="M1.600 6A12 12 0 0 1 22.400 6H12z" fill="#e53935"/><path d="M1.600 6L7 15l5-9z" fill="#e53935"/><path d="M22.400 6Q26 14 20 21l-8 3 5-9V6z" fill="#fbc12d"/><circle cx="12" cy="12" r="5.800" fill="#fff"/><circle cx="12" cy="12" r="4.500" fill="#1a73e8"/><circle cx="18" cy="18" r="7.500" fill="#8d6e63"/><text x="18" y="21" text-anchor="middle" font-size="8" fill="#fff">G</text></svg></button>
    <button class="on double" aria-label="Explorador"><svg width="22" height="18" viewBox="0 0 22 18"><path d="M0 0h8l2 2h12v16H0z" fill="#e9b13b"/><path d="M0 4h22v14H0z" fill="#ffd869"/><path d="M4 18v-7h14v7h-3v-4H7v4z" fill="#3498db"/></svg></button>
    <button aria-label="Outlook"><svg width="24" height="22" viewBox="0 0 24 22"><path d="M6 4l9-4 9 7v12q0 3-3 3H8q-2 0-2-3z" fill="#1473c8"/><path d="M7 3h12v9H7z" fill="#28a8ea"/><path d="M7 14l9 2 8-8v11q0 3-3 3H8z" fill="#2bb9f2"/><rect y="6" width="13" height="13" rx="1" fill="#0f64b8"/><circle cx="6.500" cy="12.500" r="3" fill="none" stroke="#fff" stroke-width="1.700"/></svg></button>
    <button class="on" aria-label="Firefox"><svg width="24" height="24" viewBox="0 0 24 24"><defs><linearGradient id="ff" x1="1" x2="0" y2="1"><stop stop-color="#ffe14a"/><stop offset=".5" stop-color="#ff8a1f"/><stop offset="1" stop-color="#f22b55"/></linearGradient></defs><path d="M3 5l1 2 3-1 1-3 3 3q3-1 4-6 3 2 4 6l2-2q3 5 2 10-2 9-11 10Q1 23 .5 13 0 9 3 5z" fill="url(#ff)"/><circle cx="12" cy="13" r="5.500" fill="#8146d8"/><path d="M5 8q4-1 7 2-1 2-4 2 1 5 6 4-7 5-10-1z" fill="#ff7130"/></svg></button>
    <button aria-label="Acrobat"><svg width="21" height="21" viewBox="0 0 21 21"><rect width="21" height="21" rx="4" fill="#b30b00"/><path d="M10 4q2 0 1 3-2 6-6 9-2-1 1-3 5-2 9-1 3 1 1 2-4-1-6-6-1-3 0-4z" fill="none" stroke="#fff" stroke-width="1.300"/></svg></button>
    <button class="on" aria-label="Java"><svg width="24" height="24" viewBox="0 0 24 24"><rect width="24" height="24" fill="#d3dbe3"/><path d="M1 11q4-2 7 2l2 4-3 2q-3-4-5-2-2-3-1-6zM23 11q-4-2-6 2l-1 4 3 2q2-4 4-2z" fill="#555c63"/><path d="M13 1q5 6 5 13H7Q8 5 13 1z" fill="#1f2224"/><path d="M7 13q5 2 11 0 1 6-2 10-2-1-4 0-2-1-4 0-3-4-1-10z" fill="#fff"/><circle cx="13" cy="9.500" r="3" fill="#d22626"/></svg></button>
    <div class="tray">
      <svg width="12" height="7" viewBox="0 0 12 7"><path d="M.5 6.500L6 1l5.500 5.500" fill="none" stroke="#fff" stroke-width="1.300"/></svg>
      <svg width="16" height="12" viewBox="0 0 16 12"><path d="M.5 4h2.500l3-3v10L3 8H.5zM8.500 4q1.500 2 0 4M10.500 2.500q3 3.500 0 7" fill="none" stroke="#fff"/><path d="M12.800 1q4 5 0 10" fill="none" stroke="#777"/></svg>
      <svg width="13" height="13" viewBox="0 0 13 13"><path d="M1 12Q1 2 12 1M4 12q0-7 8-8M7 12q0-5 5-5" fill="none" stroke="#ddd" stroke-width="1.200"/><circle cx="11" cy="11" r="1.500" fill="#fff"/></svg>
      <svg width="12" height="16" viewBox="0 0 12 16"><path d="M2 2.500q4-3 8 0M2 13.500q4 3 8 0M.6 5h7v6h-7zM7.600 7l3.500-2v6L7.600 9" fill="none" stroke="#fff" stroke-width="1.100"/></svg>
      <span class="lang">ESP</span>
      <time>9:43<br>24/4/2025</time>
      <svg class="notice" width="25" height="26" viewBox="0 0 25 26"><path d="M0 1h16v13H8l-4 4v-4H0z" fill="#fff"/><path d="M3 4.500h10M3 7.500h10M3 10.500h7" stroke="#222"/><circle cx="16" cy="16" r="7.500" fill="#333" stroke="#999"/><text x="16" y="20" text-anchor="middle" font-size="11" fill="#fff">1</text></svg>
    </div>
  </footer>
</div>
</body>
</html>
```
FILE: styles.css
```css
* { box-sizing: border-box; }
body { margin: 0; font-family: Roboto, sans-serif; font-size: 14px; color: #2c363a; }
button { border: 0; padding: 0; margin: 0; background: none; font: inherit; color: inherit; }
input { font: inherit; border: 0; outline: 0; }
a { color: inherit; text-decoration: none; }
ul { list-style: none; margin: 0; padding: 0; }
p, h2, pre { margin: 0; }
svg { display: block; fill: currentColor; flex: none; }
.sprite { position: absolute; width: 0; height: 0; }
.screen { height: 100vh; display: flex; flex-direction: column; overflow: hidden; }

/* Browser tabs */
.tabstrip { flex: none; height: 40px; background: #d3e2fd; display: flex; padding: 6px 0 0 6px; font: 12px "Noto Sans", sans-serif; color: #3c4043; }
.tab-search { width: 28px; height: 28px; border-radius: 10px; background: #ebf1fe; display: grid; place-items: center; margin-right: 6px; }
.tab { width: 238px; height: 28px; padding: 0 16px 0 8px; display: flex; align-items: center; gap: 8px; }
.tab-title { flex: 1; white-space: nowrap; overflow: hidden; font-size: 12px; }
.fade { mask-image: linear-gradient(to right, #000 92%, transparent); }
.tab.active { position: relative; width: 232px; height: 34px; padding: 0 11px 6px 8px; background: #fff; border-radius: 10px 10px 0 0; color: #1f1f1f; }
.tab.active::before, .tab.active::after { content: ""; position: absolute; bottom: 0; width: 10px; height: 10px; }
.tab.active::before { left: -10px; background: radial-gradient(circle at 0 0, transparent 10px, #fff 10px); }
.tab.active::after { right: -10px; background: radial-gradient(circle at 100% 0, transparent 10px, #fff 10px); }
.tab.active + .tab { padding: 0 12px 0 14px; }
.tab-sep { width: 2px; height: 16px; margin: 6px 10px 0 2px; background: #a8c7fa; }
.tab-new { width: 12px; height: 28px; display: grid; place-items: center; margin-right: auto; }
.window-buttons { display: flex; height: 28px; }
.window-buttons button { width: 46px; display: grid; place-items: center; }

/* Address bar */
.navbar-wrap { flex: none; background: #d3e2fd; }
.navbar { height: 47px; display: flex; gap: 8px; padding: 6px 4px; background: #fff; border-radius: 8px 8px 0 0; border-bottom: 1px solid #dcdcdc; }
.nav-group { display: flex; }
.nav-group button { width: 36px; height: 34px; display: grid; place-items: center; }
.omnibox { flex: 1; height: 34px; padding: 0 16px 0 5px; display: flex; align-items: center; gap: 8px; border-radius: 17px; background: #ebf0f9; color: #474747; font: 13px "Noto Sans", sans-serif; }
.omnibox b { font-weight: 400; color: #1f1f1f; }
.site-info { width: 24px; height: 24px; border-radius: 50%; background: #fff; display: grid; place-items: center; }
.url { flex: 1; white-space: nowrap; }
.profile { width: 20px; height: 20px; border-radius: 50%; background: #8d6e63; color: #fff; font-size: 11px; line-height: 20px; text-align: center; }

/* Mail client */
.mail { position: relative; flex: 1; min-height: 0; display: grid; grid-template-columns: 42px 241px 362px 1fr; }
.mail > * { min-height: 0; min-width: 0; }
.rail { background: #06173a; color: #fff; display: flex; flex-direction: column; }
.rail a { flex: none; height: 42px; display: grid; place-items: center; }
.rail .logo { height: 58px; }
.rail .compose { color: #37beff; }
.rail .current { background: #0c2660; }
.rail .cpanel { height: 28px; color: #ff7a4d; font: italic 900 11px Roboto, sans-serif; }
.rail .logout { color: #ef5561; }
.spacer { flex: 1; }
.folders, .list { display: flex; flex-direction: column; border-right: 1px solid #d4d4d4; background: #fff; }
.bar { flex: none; height: 58px; background: #f3f3f3; border-bottom: 1px solid #cfd4d6; display: flex; }
.account { align-items: center; justify-content: space-between; padding: 0 9px 0 22px; }
.folders ul { flex: 1; }
.folders li { height: 36px; border-bottom: 1px solid #f0f2f3; }
.folders li a { height: 34px; padding-left: 9px; display: flex; align-items: center; gap: 8px; }
.folders .selected { background: #e9f7fe; }
.foot { flex: none; height: 35px; border-top: 1px solid #cfd4d6; background: #fff; }
.quota { display: block; width: 16px; height: 16px; margin: 9px 0 0 32px; border-radius: 4px; background: #777d80; }
.tools { justify-content: center; gap: 12px; font-size: 13px; }
.tools button { display: flex; flex-direction: column; align-items: center; gap: 6px; padding-top: 9px; line-height: 18px; }
.tools button:disabled { color: #9b9fa1; }
.search { flex: none; height: 36px; padding: 0 8px 2px 12px; display: flex; align-items: center; gap: 7px; background: #fbfbfb; color: #777; }
.search input { flex: 1; min-width: 0; padding: 0; background: none; }
.search input::placeholder { color: #777; }
.search button { color: #2c363a; margin-right: 5px; }
.search button:last-child { margin: 0; }
.scroller { flex: 1; min-height: 0; overflow: hidden; display: flex; }
.messages { flex: 1; }
.messages li { display: grid; grid-template-columns: 1fr auto 18px; gap: 1px 8px; padding: 1px 9px 2px 25px; border-left: 3px solid transparent; border-bottom: 1px solid #f0f2f3; }
.messages .selected { background: #e9f7fe; border-left-color: #a9d8ee; border-bottom-color: #e9f7fe; }
.from, .date { font-size: 13px; line-height: 24px; color: #777; }
.flag { margin-top: 5px; }
.clip { margin-top: 3px; color: #999; }
.subject { grid-column: 1 / 3; position: relative; line-height: 1.8; white-space: nowrap; }
.subject::before { content: ""; position: absolute; left: -14px; top: 10px; width: 6px; height: 6px; border-radius: 50%; background: #2c363a; }
.scrollbar { width: 15px; background: #f3f3f3; color: #c1c1c1; display: flex; flex-direction: column; align-items: center; padding: 6px 0; }
.thumb { width: 9px; height: 90px; margin: 7px 0 auto; border-radius: 5px; background: #bfbfbf; }
.pager { display: flex; padding: 6px 12px; gap: 12px; }
.pager span { flex: 1; line-height: 26px; }
.pager input { width: 42px; height: 26px; border: 1px solid #ced4da; border-radius: 4px; }
.pager b { width: 14px; line-height: 22px; font-size: 18px; }
.reader { background: #fff; }
.tools .drop { padding-top: 26px; margin-left: -2px; margin-right: -1px; }
.tools .wide { margin-left: -7px; margin-right: 12px; }
.tools .more { margin-left: 4px; }
article { padding: 15px 14px; }
h2 { font-size: 21px; line-height: 25px; font-weight: 700; }
h2 a { display: inline-block; margin-left: 3px; }
.summary { display: flex; gap: 14px; margin-top: 6px; }
.summary a { color: #1b95e0; }
.to { line-height: 20px; margin-top: 4px; }
.links { display: flex; gap: 12px; margin-top: 5px; font-size: 13px; line-height: 20px; }
.links a { display: flex; align-items: center; gap: 4px; }
.links svg { color: #0ba7ff; }
pre { margin-top: 22px; font: 12px/1.625 "DejaVu Sans Mono", monospace; }
.status { position: absolute; left: 0; bottom: 0; height: 20px; padding: 0 32px 0 5px; background: #d6e2fb; color: #474747; font: 11px/20px "Noto Sans", sans-serif; border-radius: 0 3px 0 0; white-space: nowrap; }

/* Windows taskbar */
.taskbar { flex: none; height: 40px; padding-left: 1px; background: #1c1f21; display: flex; gap: 1px; color: #fff; font: 11px "Noto Sans", sans-serif; }
.taskbar button { width: 48px; height: 40px; display: grid; place-items: center; }
.taskbar .on { background: linear-gradient(#76b9ed, #76b9ed) center bottom / 40px 2px no-repeat; }
.taskbar .focus { background: linear-gradient(#76b9ed, #76b9ed) center bottom / 48px 2px no-repeat #4a4c4d; }
.taskbar .double { background: linear-gradient(to right, #76b9ed 31px, #4a7da3 31px) center bottom / 40px 2px no-repeat; }
.tray { margin-left: auto; display: flex; align-items: center; gap: 11px; padding-right: 12px; border-right: 1px solid #555; margin-right: 4px; }
.tray time { text-align: center; line-height: 18px; margin: 0 5px; }
.notice { margin-top: 4px; }
```
